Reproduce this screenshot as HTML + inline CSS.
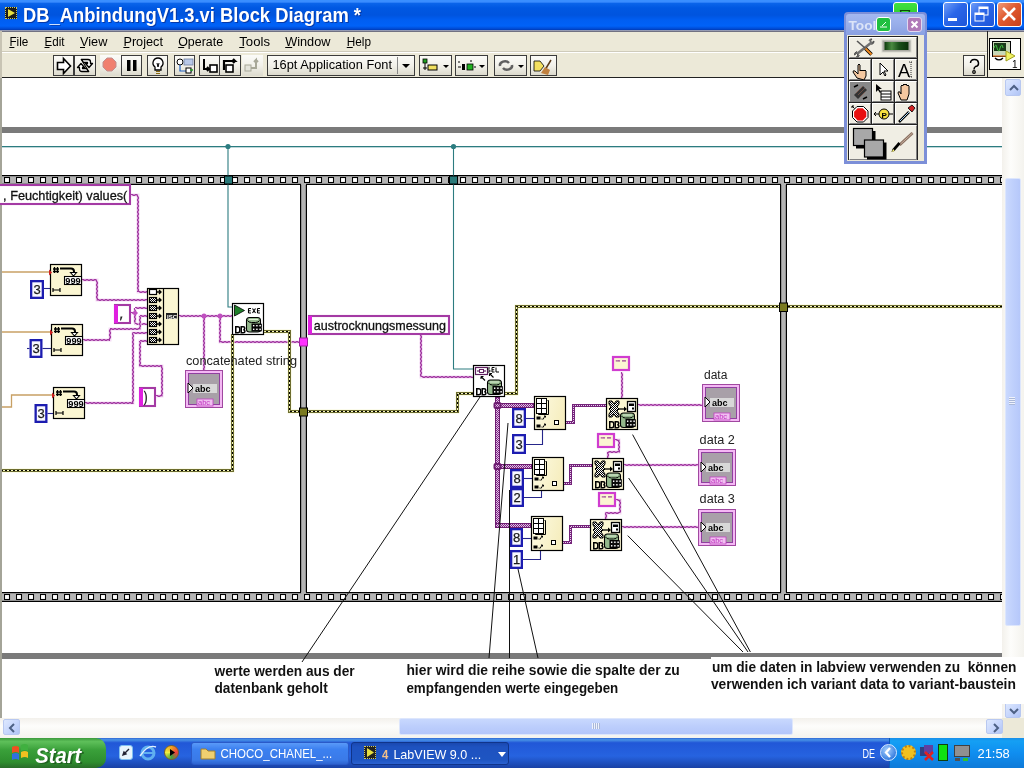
<!DOCTYPE html>
<html><head><meta charset="utf-8">
<style>
*{box-sizing:border-box}
html,body{margin:0;padding:0;width:1024px;height:768px;overflow:hidden;background:#fff;font-family:"Liberation Sans",sans-serif}
.a{position:absolute}
svg text{font-family:"Liberation Sans",sans-serif}
svg{will-change:transform}
#title{left:0;top:0;width:1024px;height:32px;background:linear-gradient(#3a90ff 0px,#3a8cff 2px,#0a64ea 3.5px,#0058e2 8px,#0054de 15px,#005ef2 20px,#0062f8 26px,#0048d0 29px,#003cb8 29.8px,#a8b0cc 30px,#6a6a78 31.7px)}
#ttext{left:21.5px;top:4px;color:#fff;font-weight:bold;font-size:20px;white-space:nowrap;text-shadow:1px 1px 0 #0a2a88;letter-spacing:-0.8px}
.tbtn{top:2px;width:25px;height:25px;border:1.5px solid #fff;border-radius:3px;background:linear-gradient(135deg,#6f9ef8 0%,#2a66e8 45%,#1e55d8 100%)}
#menu{left:0;top:32px;width:1024px;height:46px;background:#ece9d8}
.mi{top:34px;font-size:12.5px;color:#000;white-space:nowrap}
.tb{background:linear-gradient(#fbfbf8,#f2f1ea 50%,#dcdacd)}
.sbtn{border:1px solid #b8c8f0;border-radius:2px;background:linear-gradient(135deg,#dde8fe,#c4d4fc 60%,#b0c4f4)}
.sthumb{border:1px solid #dde6fc;border-radius:2px;background:linear-gradient(90deg,#cad9fe,#bfd0fc 50%,#b6c8fa)}
#vs{left:1002px;top:78px;width:22px;height:640px;background:linear-gradient(90deg,#f3f1ec,#fdfdfb 40%,#f4f3ee)}
#hs{left:0;top:718px;width:1002px;height:20px;background:linear-gradient(#f3f1ec,#fdfdfb 40%,#f4f3ee)}
#corner{left:1002px;top:718px;width:22px;height:20px;background:#ece9d8}
#task{left:0;top:738px;width:1024px;height:30px;background:linear-gradient(#3168d5 0%,#4993e6 6%,#2157d7 16%,#2663e0 60%,#1941a5 100%)}
</style></head><body>
<div id="title" class="a"></div>
<svg class="a" style="left:0;top:0" width="1024" height="31"><text opacity="0.7" x="24.00" y="23" font-size="20.6" font-weight="bold" fill="#0a2a88" textLength="337.99" lengthAdjust="spacingAndGlyphs" style="white-space:pre" >DB_AnbindungV1.3.vi Block Diagram *</text><text x="23.00" y="22" font-size="20.6" font-weight="bold" fill="#fff" textLength="337.99" lengthAdjust="spacingAndGlyphs" style="white-space:pre" >DB_AnbindungV1.3.vi Block Diagram *</text></svg>
<div class="a tbtn" style="left:943px"><div class="a" style="left:4px;top:15px;width:9px;height:3px;background:#fff"></div></div>
<div class="a tbtn" style="left:970px"><svg class="a" style="left:0;top:0" width="22" height="22"><rect x="8" y="4" width="9" height="8" fill="none" stroke="#fff" stroke-width="1"/><rect x="8" y="4" width="9" height="2" fill="#fff"/><rect x="4" y="10" width="9" height="8" fill="#2a66e8" stroke="#fff" stroke-width="1"/><rect x="4" y="10" width="9" height="2" fill="#fff"/></svg></div>
<div class="a tbtn" style="left:997px;background:linear-gradient(135deg,#f09a78 0%,#e05a30 45%,#c8401c 100%)"><svg class="a" style="left:0;top:0" width="22" height="22"><path d="M5,5 l12,12 M17,5 l-12,12" stroke="#fff" stroke-width="2.6"/></svg></div>
<div id="menu" class="a"></div>
<svg class="a" style="left:0;top:0" width="1024" height="80"><text x="9.40" y="46" font-size="12.5" fill="#000" textLength="18.90" lengthAdjust="spacingAndGlyphs" style="white-space:pre" >File</text><rect x="9.4" y="47" width="5" height="1" fill="#000"/><text x="44.50" y="46" font-size="12.5" fill="#000" textLength="20.00" lengthAdjust="spacingAndGlyphs" style="white-space:pre" >Edit</text><rect x="44.5" y="47" width="5" height="1" fill="#000"/><text x="80.00" y="46" font-size="12.5" fill="#000" textLength="27.37" lengthAdjust="spacingAndGlyphs" style="white-space:pre" >View</text><rect x="80" y="47" width="5" height="1" fill="#000"/><text x="123.40" y="46" font-size="12.5" fill="#000" textLength="39.60" lengthAdjust="spacingAndGlyphs" style="white-space:pre" >Project</text><rect x="123.4" y="47" width="6" height="1" fill="#000"/><text x="178.20" y="46" font-size="12.5" fill="#000" textLength="44.90" lengthAdjust="spacingAndGlyphs" style="white-space:pre" >Operate</text><rect x="178.2" y="47" width="6" height="1" fill="#000"/><text x="239.30" y="46" font-size="12.5" fill="#000" textLength="30.71" lengthAdjust="spacingAndGlyphs" style="white-space:pre" >Tools</text><rect x="239.3" y="47" width="5" height="1" fill="#000"/><text x="285.20" y="46" font-size="12.5" fill="#000" textLength="45.27" lengthAdjust="spacingAndGlyphs" style="white-space:pre" >Window</text><rect x="285.2" y="47" width="7" height="1" fill="#000"/><text x="346.75" y="46" font-size="12.5" fill="#000" textLength="24.25" lengthAdjust="spacingAndGlyphs" style="white-space:pre" >Help</text><rect x="346.75" y="47" width="6" height="1" fill="#000"/></svg>
<div class="a" style="left:0;top:52px;width:987px;height:1px;background:#fff"></div>
<div class="a" style="left:0;top:51px;width:987px;height:1px;background:#cfcbbb"></div>
<div class="a" style="left:987px;top:31px;width:1px;height:47px;background:#222"></div>
<div class="a" style="left:0;top:77px;width:1024px;height:1.3px;background:#222"></div>
<div class="a" style="left:0;top:31px;width:2px;height:47px;background:#c8c4b4"></div>
<div class="a tb" style="left:53px;top:55px;width:21px;height:21px;border:1px solid #3c3c3c;"><svg width="19" height="19" style="position:absolute;left:0;top:0"><path d="M3.5,6.5h6v-4l7,7.5l-7,7.5v-4h-6z" fill="#fff" stroke="#000" stroke-width="1.6"/></svg></div>
<div class="a tb" style="left:74px;top:55px;width:22px;height:21px;border:1px solid #3c3c3c;"><svg width="20" height="19" style="position:absolute;left:0;top:0"><path d="M6.5,3.5 h6.5 q2.5,0 2.5,2.5 v1.5 h2 l-3.5,4 l-3.5,-4 h2 v-1 h-4z" fill="#fff" stroke="#000" stroke-width="1.3" stroke-linejoin="round"/><path d="M13.5,15.5 h-6.5 q-2.5,0 -2.5,-2.5 v-1.5 h-2 l3.5,-4 l3.5,4 h-2 v1 h4z" fill="#fff" stroke="#000" stroke-width="1.3" stroke-linejoin="round"/><path d="M6,3 L14,16" stroke="#000" stroke-width="1.1"/></svg></div>
<div class="a tb" style="left:100px;top:55px;width:21px;height:21px;"><svg width="19" height="19" style="position:absolute;left:0;top:0"><path d="M7,3h5l4,4v5l-4,4h-5l-4,-4v-5z" fill="#f08070" stroke="#c09090" stroke-width="1"/></svg></div>
<div class="a tb" style="left:121px;top:55px;width:21px;height:21px;border:1px solid #3c3c3c;"><svg width="19" height="19" style="position:absolute;left:0;top:0"><rect x="5" y="4" width="3.5" height="11" fill="#000"/><rect x="11" y="4" width="3.5" height="11" fill="#000"/></svg></div>
<div class="a tb" style="left:147px;top:55px;width:21px;height:21px;border:1px solid #3c3c3c;"><svg width="19" height="19" style="position:absolute;left:0;top:0"><path d="M10,2 a5,5 0 0 1 3,9 v3 h-6 v-3 a5,5 0 0 1 3,-9z" fill="#fff" stroke="#000" stroke-width="1.3"/><path d="M8,15.5h4M8,17.5h4" stroke="#8a6a10" stroke-width="1.2"/><path d="M9,7 l1,4 l1,-4" fill="none" stroke="#000"/></svg></div>
<div class="a tb" style="left:174px;top:55px;width:21px;height:21px;border:1px solid #3c3c3c;"><svg width="19" height="19" style="position:absolute;left:0;top:0"><circle cx="5" cy="6" r="3" fill="#fff" stroke="#000"/><path d="M5,9 v6 h12" fill="none" stroke="#2060c0" stroke-width="1.2"/><rect x="9" y="3" width="9" height="6" fill="#b8c8e8" stroke="#7080a0" stroke-width="0.8"/><rect x="11" y="12" width="5" height="5" fill="#fff" stroke="#000"/><path d="M15,14 h3" stroke="#20a020" stroke-width="1.5"/></svg></div>
<div class="a tb" style="left:199px;top:55px;width:21px;height:21px;border:1px solid #3c3c3c;"><svg width="19" height="19" style="position:absolute;left:0;top:0"><path d="M4,3 v10 h5 l-2,-2 M9,13 l-2,2" fill="none" stroke="#000" stroke-width="2"/><rect x="10" y="9" width="7" height="7" fill="#fff" stroke="#000" stroke-width="1.6"/></svg></div>
<div class="a tb" style="left:219px;top:55px;width:22px;height:21px;border:1px solid #3c3c3c;"><svg width="20" height="19" style="position:absolute;left:0;top:0"><path d="M4,14 v-9 h11 l-2,-2 M15,5 l-2,2" fill="none" stroke="#000" stroke-width="2.2"/><rect x="6" y="9" width="7" height="7" fill="#fff" stroke="#000" stroke-width="1.6"/></svg></div>
<div class="a tb" style="left:242px;top:55px;width:21px;height:21px;"><svg width="19" height="19" style="position:absolute;left:0;top:0"><rect x="3" y="10" width="6" height="6" fill="#e4e4dc" stroke="#a8a898"/><path d="M9,13 h5 v-8 l-2,2 M14,5 l2,2" fill="none" stroke="#a8a898" stroke-width="2"/></svg></div>
<div class="a tb" style="left:267px;top:55px;width:148px;height:21px;border:1px solid #3c3c3c"></div>
<svg class="a" style="left:0;top:0" width="1024" height="80"><text x="272.50" y="69.4" font-size="12.2" fill="#000" textLength="119.50" lengthAdjust="spacingAndGlyphs" style="white-space:pre" >16pt Application Font</text></svg>
<div class="a" style="left:397px;top:57px;width:1px;height:17px;background:#888"></div>
<div class="a" style="left:402px;top:64px;width:0;height:0;border-left:4px solid transparent;border-right:4px solid transparent;border-top:4px solid #000"></div>
<div class="a tb" style="left:419px;top:55px;width:33px;height:21px;border:1px solid #3c3c3c;"><svg width="31" height="19" style="position:absolute;left:0;top:0"><rect x="3" y="3" width="4" height="4" fill="#20a020" stroke="#000" stroke-width="0.8"/><path d="M5,7 v7 M3,12 h4" stroke="#000" stroke-width="1"/><rect x="8" y="9" width="9" height="5" fill="#f0e060" stroke="#000" stroke-width="1"/><path d="M23,9 l3,3 l3,-3z" fill="#000"/></svg></div>
<div class="a tb" style="left:455px;top:55px;width:33px;height:21px;border:1px solid #3c3c3c;"><svg width="31" height="19" style="position:absolute;left:0;top:0"><path d="M2,6 h2 M15,4 v2 M6,5 v0" stroke="#000"/><rect x="6" y="8" width="3" height="6" fill="#000"/><rect x="11" y="8" width="6" height="6" fill="#20b020" stroke="#000" stroke-width="0.8"/><path d="M2,11 h3 M18,11 h2" stroke="#000"/><path d="M23,9 l3,3 l3,-3z" fill="#000"/></svg></div>
<div class="a tb" style="left:494px;top:55px;width:33px;height:21px;border:1px solid #3c3c3c;"><svg width="31" height="19" style="position:absolute;left:0;top:0"><path d="M5,10 a5,4 0 0 1 9,-3" fill="none" stroke="#606060" stroke-width="2.5"/><path d="M17,9 a5,4 0 0 1 -9,3" fill="none" stroke="#606060" stroke-width="2.5"/><path d="M23,9 l3,3 l3,-3z" fill="#000"/></svg></div>
<div class="a tb" style="left:530px;top:55px;width:27px;height:21px;border:1px solid #3c3c3c;"><svg width="25" height="19" style="position:absolute;left:0;top:0"><path d="M3,5 h6 l4,5 l-4,5 h-6z" fill="#f4e060" stroke="#000" stroke-width="0.8"/><path d="M14,14 l6,-10" stroke="#5a3a1a" stroke-width="1.5"/><path d="M10,17 l4,-6 l5,3 l-2,5z" fill="#c08040"/></svg></div>
<div class="a tb" style="left:963px;top:55px;width:22px;height:21px;border:1px solid #3c3c3c;"><svg width="20" height="19" style="position:absolute;left:0;top:0"><path d="M6.5,7 a4,3.5 0 1 1 5,3.5 q-1.5,1 -1.5,3" fill="none" stroke="#000" stroke-width="1.5"/><circle cx="10" cy="16" r="1.3" fill="none" stroke="#000" stroke-width="1.2"/></svg></div>
<div class="a" style="left:989px;top:38px;width:32px;height:32px;background:#fff;border:1.2px solid #000"><svg width="30" height="30" style="position:absolute;left:0;top:0"><rect x="2.5" y="2.5" width="18" height="15" fill="#c8d8b8" stroke="#000" stroke-width="1"/><rect x="4" y="4" width="12" height="8" fill="#1a3a1a"/><path d="M4,9 q2,-6 3,0 q2,6 3,0 q2,-6 3,0" fill="none" stroke="#40c040" stroke-width="1"/><path d="M3,17 h14" stroke="#e07020" stroke-width="1.2"/><path d="M5,19 q4,4 8,0" fill="none" stroke="#000" stroke-width="1.2"/><path d="M16,12 l9,5 l-9,5z" fill="#f0f060" stroke="#a0a020" stroke-width="1"/><text x="22" y="29" font-size="10" fill="#000">1</text></svg></div>
<div class="a" style="left:5px;top:7px;width:12px;height:12px;background:#1a1a1a;border:1px dotted #c8c860"><svg width="10" height="10" style="position:absolute;left:0;top:0"><path d="M2,1 l7,4 l-7,4z" fill="#e8e040"/></svg></div>
<div class="a" style="left:893px;top:2px;width:25px;height:25px;border:1.5px solid #fff;border-radius:3px;background:linear-gradient(#40e040,#20c020)"><svg class="a" style="left:0;top:0" width="22" height="22"><path d="M6.5,7.5 h9 l-1,4 h-7z M5.5,11.5 h11 v3 h-11z" fill="none" stroke="#0a4a0a" stroke-width="1.2"/></svg></div>
<svg class="a" style="left:0;top:0" width="1024" height="768" viewBox="0 0 1024 768">
<defs><clipPath id="dclip"><rect x="0" y="78" width="1002" height="640"/></clipPath></defs>
<g clip-path="url(#dclip)">
<rect x="0" y="78" width="1002" height="640" fill="#fff"/>
<rect x="0" y="78" width="2" height="640" fill="#a4a498"/>
<rect x="2" y="127" width="1000" height="6" fill="#7a7a7a"/>
<rect x="2" y="653" width="1000" height="6" fill="#7a7a7a"/>
<rect x="2" y="146" width="1000" height="1.3" fill="#2c7c80"/>
<defs><pattern id="chk" x="0" y="0" width="2" height="2" patternUnits="userSpaceOnUse"><rect width="2" height="2" fill="#fff"/><rect width="1" height="1" fill="#000"/><rect x="1" y="1" width="1" height="1" fill="#000"/></pattern><pattern id="vchk" x="0" y="0" width="2" height="2" patternUnits="userSpaceOnUse"><rect width="2" height="2" fill="#e4bce8"/><rect width="1" height="1" fill="#7a2a80"/><rect x="1" y="1" width="1" height="1" fill="#7a2a80"/></pattern><linearGradient id="nodeg" x1="0" x2="1" y1="0" y2="0.3"><stop offset="0" stop-color="#fdfbe4"/><stop offset="1" stop-color="#f6eec0"/></linearGradient><pattern id="sq1" x="4" y="177" width="12" height="6" patternUnits="userSpaceOnUse"><rect x="0.5" y="0.5" width="5" height="5" fill="#fff" stroke="#000" stroke-width="1.1"/></pattern><pattern id="sq2" x="4" y="594" width="12" height="6" patternUnits="userSpaceOnUse"><rect x="0.5" y="0.5" width="5" height="5" fill="#fff" stroke="#000" stroke-width="1.1"/></pattern></defs>
<rect x="2" y="175" width="1000" height="10" fill="#b4b4b4"/>
<rect x="2" y="175" width="1000" height="1.2" fill="#000"/>
<rect x="2" y="183.8" width="1000" height="1.2" fill="#000"/>
<rect x="2" y="177" width="1000" height="6" fill="url(#sq1)"/>
<rect x="2" y="592" width="1000" height="10" fill="#b4b4b4"/>
<rect x="2" y="592" width="1000" height="1.2" fill="#000"/>
<rect x="2" y="600.8" width="1000" height="1.2" fill="#000"/>
<rect x="2" y="594" width="1000" height="6" fill="url(#sq2)"/>
<rect x="300" y="184" width="7" height="409" fill="#b4b4b4"/>
<rect x="300" y="184" width="1.2" height="409" fill="#000"/>
<rect x="305.8" y="184" width="1.2" height="409" fill="#000"/>
<rect x="301.2" y="183" width="4.6" height="2" fill="#b4b4b4"/>
<rect x="301.2" y="592" width="4.6" height="2" fill="#b4b4b4"/>
<rect x="780" y="184" width="7" height="409" fill="#b4b4b4"/>
<rect x="780" y="184" width="1.2" height="409" fill="#000"/>
<rect x="785.8" y="184" width="1.2" height="409" fill="#000"/>
<rect x="781.2" y="183" width="4.6" height="2" fill="#b4b4b4"/>
<rect x="781.2" y="592" width="4.6" height="2" fill="#b4b4b4"/>
<polyline points="228,146 228,307 232,307" fill="none" stroke="#2c7c80" stroke-width="1.1"/>
<polyline points="453.5,146 453.5,369 473,369" fill="none" stroke="#2c7c80" stroke-width="1.1"/>
<circle cx="228" cy="146.5" r="2.6" fill="#2c7c80"/><circle cx="453.5" cy="146.5" r="2.6" fill="#2c7c80"/>
<rect x="224.5" y="176" width="8" height="8" fill="#2a7a7a" stroke="#000" stroke-width="1"/>
<rect x="449.5" y="176" width="8" height="8" fill="#2a7a7a" stroke="#000" stroke-width="1"/>
<polyline points="2,272 50,272" fill="none" stroke="#c8a064" stroke-width="1.3"/>
<polyline points="2,332 51,332" fill="none" stroke="#c8a064" stroke-width="1.3"/>
<polyline points="2,407 11.5,407 11.5,395 53,395" fill="none" stroke="#c8a064" stroke-width="1.3"/>
<polyline points="131,195 138,195 138,292 147,292" fill="none" stroke="#f6dcf6" stroke-width="3"/><path d="M131.0,194.5 H133.0 V195.5 H135.0 V194.5 H137.0 V195.5 H138.0 M137.5,195.0 V197.0 H138.5 V199.0 H137.5 V201.0 H138.5 V203.0 H137.5 V205.0 H138.5 V207.0 H137.5 V209.0 H138.5 V211.0 H137.5 V213.0 H138.5 V215.0 H137.5 V217.0 H138.5 V219.0 H137.5 V221.0 H138.5 V223.0 H137.5 V225.0 H138.5 V227.0 H137.5 V229.0 H138.5 V231.0 H137.5 V233.0 H138.5 V235.0 H137.5 V237.0 H138.5 V239.0 H137.5 V241.0 H138.5 V243.0 H137.5 V245.0 H138.5 V247.0 H137.5 V249.0 H138.5 V251.0 H137.5 V253.0 H138.5 V255.0 H137.5 V257.0 H138.5 V259.0 H137.5 V261.0 H138.5 V263.0 H137.5 V265.0 H138.5 V267.0 H137.5 V269.0 H138.5 V271.0 H137.5 V273.0 H138.5 V275.0 H137.5 V277.0 H138.5 V279.0 H137.5 V281.0 H138.5 V283.0 H137.5 V285.0 H138.5 V287.0 H137.5 V289.0 H138.5 V291.0 H137.5 V292.0 M138.0,291.5 H140.0 V292.5 H142.0 V291.5 H144.0 V292.5 H146.0 V291.5 H147.0" fill="none" stroke="#a23aa2" stroke-width="1.1"/>
<polyline points="82,280 97,280 97,300 147,300" fill="none" stroke="#f6dcf6" stroke-width="3"/><path d="M82.0,279.5 H84.0 V280.5 H86.0 V279.5 H88.0 V280.5 H90.0 V279.5 H92.0 V280.5 H94.0 V279.5 H96.0 V280.5 H97.0 M96.5,280.0 V282.0 H97.5 V284.0 H96.5 V286.0 H97.5 V288.0 H96.5 V290.0 H97.5 V292.0 H96.5 V294.0 H97.5 V296.0 H96.5 V298.0 H97.5 V300.0 H96.5 V300.0 M97.0,299.5 H99.0 V300.5 H101.0 V299.5 H103.0 V300.5 H105.0 V299.5 H107.0 V300.5 H109.0 V299.5 H111.0 V300.5 H113.0 V299.5 H115.0 V300.5 H117.0 V299.5 H119.0 V300.5 H121.0 V299.5 H123.0 V300.5 H125.0 V299.5 H127.0 V300.5 H129.0 V299.5 H131.0 V300.5 H133.0 V299.5 H135.0 V300.5 H137.0 V299.5 H139.0 V300.5 H141.0 V299.5 H143.0 V300.5 H145.0 V299.5 H147.0 V300.5 H147.0" fill="none" stroke="#a23aa2" stroke-width="1.1"/>
<polyline points="131,313 135,313" fill="none" stroke="#f6dcf6" stroke-width="3"/><path d="M131.0,312.5 H133.0 V313.5 H135.0 V312.5 H135.0" fill="none" stroke="#a23aa2" stroke-width="1.1"/>
<polyline points="135,308 135,324" fill="none" stroke="#f6dcf6" stroke-width="3"/><path d="M134.5,308.0 V310.0 H135.5 V312.0 H134.5 V314.0 H135.5 V316.0 H134.5 V318.0 H135.5 V320.0 H134.5 V322.0 H135.5 V324.0 H134.5 V324.0" fill="none" stroke="#a23aa2" stroke-width="1.1"/>
<polyline points="135,308 147,308" fill="none" stroke="#f6dcf6" stroke-width="3"/><path d="M135.0,307.5 H137.0 V308.5 H139.0 V307.5 H141.0 V308.5 H143.0 V307.5 H145.0 V308.5 H147.0 V307.5 H147.0" fill="none" stroke="#a23aa2" stroke-width="1.1"/>
<polyline points="135,324 147,324" fill="none" stroke="#f6dcf6" stroke-width="3"/><path d="M135.0,323.5 H137.0 V324.5 H139.0 V323.5 H141.0 V324.5 H143.0 V323.5 H145.0 V324.5 H147.0 V323.5 H147.0" fill="none" stroke="#a23aa2" stroke-width="1.1"/>
<polyline points="83,340 110,340 110,329 140,329 140,316 147,316" fill="none" stroke="#f6dcf6" stroke-width="3"/><path d="M83.0,339.5 H85.0 V340.5 H87.0 V339.5 H89.0 V340.5 H91.0 V339.5 H93.0 V340.5 H95.0 V339.5 H97.0 V340.5 H99.0 V339.5 H101.0 V340.5 H103.0 V339.5 H105.0 V340.5 H107.0 V339.5 H109.0 V340.5 H110.0 M109.5,340.0 V338.0 H110.5 V336.0 H109.5 V334.0 H110.5 V332.0 H109.5 V330.0 H110.5 V329.0 M110.0,328.5 H112.0 V329.5 H114.0 V328.5 H116.0 V329.5 H118.0 V328.5 H120.0 V329.5 H122.0 V328.5 H124.0 V329.5 H126.0 V328.5 H128.0 V329.5 H130.0 V328.5 H132.0 V329.5 H134.0 V328.5 H136.0 V329.5 H138.0 V328.5 H140.0 V329.5 H140.0 M139.5,329.0 V327.0 H140.5 V325.0 H139.5 V323.0 H140.5 V321.0 H139.5 V319.0 H140.5 V317.0 H139.5 V316.0 M140.0,315.5 H142.0 V316.5 H144.0 V315.5 H146.0 V316.5 H147.0" fill="none" stroke="#a23aa2" stroke-width="1.1"/>
<polyline points="85,403 133,403 133,333 147,333" fill="none" stroke="#f6dcf6" stroke-width="3"/><path d="M85.0,402.5 H87.0 V403.5 H89.0 V402.5 H91.0 V403.5 H93.0 V402.5 H95.0 V403.5 H97.0 V402.5 H99.0 V403.5 H101.0 V402.5 H103.0 V403.5 H105.0 V402.5 H107.0 V403.5 H109.0 V402.5 H111.0 V403.5 H113.0 V402.5 H115.0 V403.5 H117.0 V402.5 H119.0 V403.5 H121.0 V402.5 H123.0 V403.5 H125.0 V402.5 H127.0 V403.5 H129.0 V402.5 H131.0 V403.5 H133.0 V402.5 H133.0 M132.5,403.0 V401.0 H133.5 V399.0 H132.5 V397.0 H133.5 V395.0 H132.5 V393.0 H133.5 V391.0 H132.5 V389.0 H133.5 V387.0 H132.5 V385.0 H133.5 V383.0 H132.5 V381.0 H133.5 V379.0 H132.5 V377.0 H133.5 V375.0 H132.5 V373.0 H133.5 V371.0 H132.5 V369.0 H133.5 V367.0 H132.5 V365.0 H133.5 V363.0 H132.5 V361.0 H133.5 V359.0 H132.5 V357.0 H133.5 V355.0 H132.5 V353.0 H133.5 V351.0 H132.5 V349.0 H133.5 V347.0 H132.5 V345.0 H133.5 V343.0 H132.5 V341.0 H133.5 V339.0 H132.5 V337.0 H133.5 V335.0 H132.5 V333.0 H133.5 V333.0 M133.0,332.5 H135.0 V333.5 H137.0 V332.5 H139.0 V333.5 H141.0 V332.5 H143.0 V333.5 H145.0 V332.5 H147.0 V333.5 H147.0" fill="none" stroke="#a23aa2" stroke-width="1.1"/>
<polyline points="156,396 162,396 162,366 140,366 140,341 147,341" fill="none" stroke="#f6dcf6" stroke-width="3"/><path d="M156.0,395.5 H158.0 V396.5 H160.0 V395.5 H162.0 V396.5 H162.0 M161.5,396.0 V394.0 H162.5 V392.0 H161.5 V390.0 H162.5 V388.0 H161.5 V386.0 H162.5 V384.0 H161.5 V382.0 H162.5 V380.0 H161.5 V378.0 H162.5 V376.0 H161.5 V374.0 H162.5 V372.0 H161.5 V370.0 H162.5 V368.0 H161.5 V366.0 H162.5 V366.0 M162.0,365.5 H160.0 V366.5 H158.0 V365.5 H156.0 V366.5 H154.0 V365.5 H152.0 V366.5 H150.0 V365.5 H148.0 V366.5 H146.0 V365.5 H144.0 V366.5 H142.0 V365.5 H140.0 V366.5 H140.0 M139.5,366.0 V364.0 H140.5 V362.0 H139.5 V360.0 H140.5 V358.0 H139.5 V356.0 H140.5 V354.0 H139.5 V352.0 H140.5 V350.0 H139.5 V348.0 H140.5 V346.0 H139.5 V344.0 H140.5 V342.0 H139.5 V341.0 M140.0,340.5 H142.0 V341.5 H144.0 V340.5 H146.0 V341.5 H147.0" fill="none" stroke="#a23aa2" stroke-width="1.1"/>
<polyline points="179,316 232,316" fill="none" stroke="#f6dcf6" stroke-width="3"/><path d="M179.0,315.5 H181.0 V316.5 H183.0 V315.5 H185.0 V316.5 H187.0 V315.5 H189.0 V316.5 H191.0 V315.5 H193.0 V316.5 H195.0 V315.5 H197.0 V316.5 H199.0 V315.5 H201.0 V316.5 H203.0 V315.5 H205.0 V316.5 H207.0 V315.5 H209.0 V316.5 H211.0 V315.5 H213.0 V316.5 H215.0 V315.5 H217.0 V316.5 H219.0 V315.5 H221.0 V316.5 H223.0 V315.5 H225.0 V316.5 H227.0 V315.5 H229.0 V316.5 H231.0 V315.5 H232.0" fill="none" stroke="#a23aa2" stroke-width="1.1"/>
<polyline points="204,316 204,371" fill="none" stroke="#f6dcf6" stroke-width="3"/><path d="M203.5,316.0 V318.0 H204.5 V320.0 H203.5 V322.0 H204.5 V324.0 H203.5 V326.0 H204.5 V328.0 H203.5 V330.0 H204.5 V332.0 H203.5 V334.0 H204.5 V336.0 H203.5 V338.0 H204.5 V340.0 H203.5 V342.0 H204.5 V344.0 H203.5 V346.0 H204.5 V348.0 H203.5 V350.0 H204.5 V352.0 H203.5 V354.0 H204.5 V356.0 H203.5 V358.0 H204.5 V360.0 H203.5 V362.0 H204.5 V364.0 H203.5 V366.0 H204.5 V368.0 H203.5 V370.0 H204.5 V371.0" fill="none" stroke="#a23aa2" stroke-width="1.1"/>
<polyline points="220,316 220,342 300,342" fill="none" stroke="#f6dcf6" stroke-width="3"/><path d="M219.5,316.0 V318.0 H220.5 V320.0 H219.5 V322.0 H220.5 V324.0 H219.5 V326.0 H220.5 V328.0 H219.5 V330.0 H220.5 V332.0 H219.5 V334.0 H220.5 V336.0 H219.5 V338.0 H220.5 V340.0 H219.5 V342.0 H220.5 V342.0 M220.0,341.5 H222.0 V342.5 H224.0 V341.5 H226.0 V342.5 H228.0 V341.5 H230.0 V342.5 H232.0 V341.5 H234.0 V342.5 H236.0 V341.5 H238.0 V342.5 H240.0 V341.5 H242.0 V342.5 H244.0 V341.5 H246.0 V342.5 H248.0 V341.5 H250.0 V342.5 H252.0 V341.5 H254.0 V342.5 H256.0 V341.5 H258.0 V342.5 H260.0 V341.5 H262.0 V342.5 H264.0 V341.5 H266.0 V342.5 H268.0 V341.5 H270.0 V342.5 H272.0 V341.5 H274.0 V342.5 H276.0 V341.5 H278.0 V342.5 H280.0 V341.5 H282.0 V342.5 H284.0 V341.5 H286.0 V342.5 H288.0 V341.5 H290.0 V342.5 H292.0 V341.5 H294.0 V342.5 H296.0 V341.5 H298.0 V342.5 H300.0 V341.5 H300.0" fill="none" stroke="#a23aa2" stroke-width="1.1"/>
<polyline points="421,334 421,377 473,377" fill="none" stroke="#f6dcf6" stroke-width="3"/><path d="M420.5,334.0 V336.0 H421.5 V338.0 H420.5 V340.0 H421.5 V342.0 H420.5 V344.0 H421.5 V346.0 H420.5 V348.0 H421.5 V350.0 H420.5 V352.0 H421.5 V354.0 H420.5 V356.0 H421.5 V358.0 H420.5 V360.0 H421.5 V362.0 H420.5 V364.0 H421.5 V366.0 H420.5 V368.0 H421.5 V370.0 H420.5 V372.0 H421.5 V374.0 H420.5 V376.0 H421.5 V377.0 M421.0,376.5 H423.0 V377.5 H425.0 V376.5 H427.0 V377.5 H429.0 V376.5 H431.0 V377.5 H433.0 V376.5 H435.0 V377.5 H437.0 V376.5 H439.0 V377.5 H441.0 V376.5 H443.0 V377.5 H445.0 V376.5 H447.0 V377.5 H449.0 V376.5 H451.0 V377.5 H453.0 V376.5 H455.0 V377.5 H457.0 V376.5 H459.0 V377.5 H461.0 V376.5 H463.0 V377.5 H465.0 V376.5 H467.0 V377.5 H469.0 V376.5 H471.0 V377.5 H473.0 V376.5 H473.0" fill="none" stroke="#a23aa2" stroke-width="1.1"/>
<polyline points="622,372 622,398" fill="none" stroke="#f6dcf6" stroke-width="3"/><path d="M621.5,372.0 V374.0 H622.5 V376.0 H621.5 V378.0 H622.5 V380.0 H621.5 V382.0 H622.5 V384.0 H621.5 V386.0 H622.5 V388.0 H621.5 V390.0 H622.5 V392.0 H621.5 V394.0 H622.5 V396.0 H621.5 V398.0 H622.5 V398.0" fill="none" stroke="#a23aa2" stroke-width="1.1"/>
<polyline points="615,440 619,440 619,452 608,452 608,458" fill="none" stroke="#f6dcf6" stroke-width="3"/><path d="M615.0,439.5 H617.0 V440.5 H619.0 V439.5 H619.0 M618.5,440.0 V442.0 H619.5 V444.0 H618.5 V446.0 H619.5 V448.0 H618.5 V450.0 H619.5 V452.0 H618.5 V452.0 M619.0,451.5 H617.0 V452.5 H615.0 V451.5 H613.0 V452.5 H611.0 V451.5 H609.0 V452.5 H608.0 M607.5,452.0 V454.0 H608.5 V456.0 H607.5 V458.0 H608.5 V458.0" fill="none" stroke="#a23aa2" stroke-width="1.1"/>
<polyline points="616,500 620,500 620,513 606,513 606,519" fill="none" stroke="#f6dcf6" stroke-width="3"/><path d="M616.0,499.5 H618.0 V500.5 H620.0 V499.5 H620.0 M619.5,500.0 V502.0 H620.5 V504.0 H619.5 V506.0 H620.5 V508.0 H619.5 V510.0 H620.5 V512.0 H619.5 V513.0 M620.0,512.5 H618.0 V513.5 H616.0 V512.5 H614.0 V513.5 H612.0 V512.5 H610.0 V513.5 H608.0 V512.5 H606.0 V513.5 H606.0 M605.5,513.0 V515.0 H606.5 V517.0 H605.5 V519.0 H606.5 V519.0" fill="none" stroke="#a23aa2" stroke-width="1.1"/>
<polyline points="638,405 702,405" fill="none" stroke="#f6dcf6" stroke-width="3"/><path d="M638.0,404.5 H640.0 V405.5 H642.0 V404.5 H644.0 V405.5 H646.0 V404.5 H648.0 V405.5 H650.0 V404.5 H652.0 V405.5 H654.0 V404.5 H656.0 V405.5 H658.0 V404.5 H660.0 V405.5 H662.0 V404.5 H664.0 V405.5 H666.0 V404.5 H668.0 V405.5 H670.0 V404.5 H672.0 V405.5 H674.0 V404.5 H676.0 V405.5 H678.0 V404.5 H680.0 V405.5 H682.0 V404.5 H684.0 V405.5 H686.0 V404.5 H688.0 V405.5 H690.0 V404.5 H692.0 V405.5 H694.0 V404.5 H696.0 V405.5 H698.0 V404.5 H700.0 V405.5 H702.0 V404.5 H702.0" fill="none" stroke="#a23aa2" stroke-width="1.1"/>
<polyline points="624,465 698,465" fill="none" stroke="#f6dcf6" stroke-width="3"/><path d="M624.0,464.5 H626.0 V465.5 H628.0 V464.5 H630.0 V465.5 H632.0 V464.5 H634.0 V465.5 H636.0 V464.5 H638.0 V465.5 H640.0 V464.5 H642.0 V465.5 H644.0 V464.5 H646.0 V465.5 H648.0 V464.5 H650.0 V465.5 H652.0 V464.5 H654.0 V465.5 H656.0 V464.5 H658.0 V465.5 H660.0 V464.5 H662.0 V465.5 H664.0 V464.5 H666.0 V465.5 H668.0 V464.5 H670.0 V465.5 H672.0 V464.5 H674.0 V465.5 H676.0 V464.5 H678.0 V465.5 H680.0 V464.5 H682.0 V465.5 H684.0 V464.5 H686.0 V465.5 H688.0 V464.5 H690.0 V465.5 H692.0 V464.5 H694.0 V465.5 H696.0 V464.5 H698.0 V465.5 H698.0" fill="none" stroke="#a23aa2" stroke-width="1.1"/>
<polyline points="622,527 698,527" fill="none" stroke="#f6dcf6" stroke-width="3"/><path d="M622.0,526.5 H624.0 V527.5 H626.0 V526.5 H628.0 V527.5 H630.0 V526.5 H632.0 V527.5 H634.0 V526.5 H636.0 V527.5 H638.0 V526.5 H640.0 V527.5 H642.0 V526.5 H644.0 V527.5 H646.0 V526.5 H648.0 V527.5 H650.0 V526.5 H652.0 V527.5 H654.0 V526.5 H656.0 V527.5 H658.0 V526.5 H660.0 V527.5 H662.0 V526.5 H664.0 V527.5 H666.0 V526.5 H668.0 V527.5 H670.0 V526.5 H672.0 V527.5 H674.0 V526.5 H676.0 V527.5 H678.0 V526.5 H680.0 V527.5 H682.0 V526.5 H684.0 V527.5 H686.0 V526.5 H688.0 V527.5 H690.0 V526.5 H692.0 V527.5 H694.0 V526.5 H696.0 V527.5 H698.0 V526.5 H698.0" fill="none" stroke="#a23aa2" stroke-width="1.1"/>
<path d="M132,313 l3,-3 l3,3 l-3,3z" fill="#c050c0"/>
<circle cx="204" cy="316" r="2.5" fill="#c050c0"/><circle cx="220" cy="316" r="2.5" fill="#c050c0"/>
<polyline points="232.5,334 232.5,470.5 2,470.5" fill="none" stroke="#f8f8d8" stroke-width="4" stroke-linejoin="miter"/><polyline points="232.5,334 232.5,470.5 2,470.5" fill="none" stroke="#6e6e30" stroke-width="3" stroke-linejoin="miter"/><polyline points="232.5,334 232.5,470.5 2,470.5" fill="none" stroke="#000" stroke-width="1"/><polyline points="232.5,334 232.5,470.5 2,470.5" fill="none" stroke="#f8f8c0" stroke-width="1" stroke-dasharray="2,2"/>
<polyline points="264,331.5 289.5,331.5 289.5,411.5 303,411.5" fill="none" stroke="#f8f8d8" stroke-width="4" stroke-linejoin="miter"/><polyline points="264,331.5 289.5,331.5 289.5,411.5 303,411.5" fill="none" stroke="#6e6e30" stroke-width="3" stroke-linejoin="miter"/><polyline points="264,331.5 289.5,331.5 289.5,411.5 303,411.5" fill="none" stroke="#000" stroke-width="1"/><polyline points="264,331.5 289.5,331.5 289.5,411.5 303,411.5" fill="none" stroke="#f8f8c0" stroke-width="1" stroke-dasharray="2,2"/>
<polyline points="307,411.5 457.5,411.5 457.5,393.5 473,393.5" fill="none" stroke="#f8f8d8" stroke-width="4" stroke-linejoin="miter"/><polyline points="307,411.5 457.5,411.5 457.5,393.5 473,393.5" fill="none" stroke="#6e6e30" stroke-width="3" stroke-linejoin="miter"/><polyline points="307,411.5 457.5,411.5 457.5,393.5 473,393.5" fill="none" stroke="#000" stroke-width="1"/><polyline points="307,411.5 457.5,411.5 457.5,393.5 473,393.5" fill="none" stroke="#f8f8c0" stroke-width="1" stroke-dasharray="2,2"/>
<polyline points="505,393.5 516.5,393.5 516.5,306.5 1002,306.5" fill="none" stroke="#f8f8d8" stroke-width="4" stroke-linejoin="miter"/><polyline points="505,393.5 516.5,393.5 516.5,306.5 1002,306.5" fill="none" stroke="#6e6e30" stroke-width="3" stroke-linejoin="miter"/><polyline points="505,393.5 516.5,393.5 516.5,306.5 1002,306.5" fill="none" stroke="#000" stroke-width="1"/><polyline points="505,393.5 516.5,393.5 516.5,306.5 1002,306.5" fill="none" stroke="#f8f8c0" stroke-width="1" stroke-dasharray="2,2"/>
<rect x="299.5" y="408" width="8" height="8" fill="#7a7a20" stroke="#000" stroke-width="1"/>
<rect x="779.5" y="303" width="8" height="8.5" fill="#7a7a20" stroke="#000" stroke-width="1"/>
<rect x="299.5" y="338" width="8" height="8" fill="#ff30ff" stroke="#a020a0" stroke-width="1"/>
<rect x="495" y="397" width="5" height="131" fill="#6c1c70"/><rect x="496" y="398" width="3" height="129" fill="url(#vchk)"/>
<rect x="495" y="403" width="39" height="5" fill="#6c1c70"/><rect x="496" y="404" width="37" height="3" fill="url(#vchk)"/>
<rect x="495" y="464" width="37" height="5" fill="#6c1c70"/><rect x="496" y="465" width="35" height="3" fill="url(#vchk)"/>
<rect x="495" y="523" width="36" height="5" fill="#6c1c70"/><rect x="496" y="524" width="34" height="3" fill="url(#vchk)"/>
<rect x="493.5" y="402" width="8" height="7" rx="2" fill="#6c1c70"/><rect x="493.5" y="463" width="8" height="7" rx="2" fill="#6c1c70"/>
<rect x="495.5" y="404" width="4" height="3" fill="url(#vchk)"/><rect x="495.5" y="465" width="4" height="3" fill="url(#vchk)"/>
<polyline points="566,422.5 573.5,422.5 573.5,405.5 606,405.5" fill="none" stroke="#74247a" stroke-width="3"/><polyline points="566,422.5 573.5,422.5 573.5,405.5 606,405.5" fill="none" stroke="#ecd0f0" stroke-width="1" stroke-dasharray="1,1"/>
<polyline points="564,483.5 570.5,483.5 570.5,465.5 592,465.5" fill="none" stroke="#74247a" stroke-width="3"/><polyline points="564,483.5 570.5,483.5 570.5,465.5 592,465.5" fill="none" stroke="#ecd0f0" stroke-width="1" stroke-dasharray="1,1"/>
<polyline points="563,542.5 570.5,542.5 570.5,526.5 590,526.5" fill="none" stroke="#74247a" stroke-width="3"/><polyline points="563,542.5 570.5,542.5 570.5,526.5 590,526.5" fill="none" stroke="#ecd0f0" stroke-width="1" stroke-dasharray="1,1"/>
<polyline points="44,288.5 50,288.5" fill="none" stroke="#26268a" stroke-width="1.1"/>
<polyline points="27,348.5 29.5,348.5" fill="none" stroke="#26268a" stroke-width="1.1"/>
<polyline points="42.5,348.5 51,348.5" fill="none" stroke="#26268a" stroke-width="1.1"/>
<polyline points="47.5,413.5 53,413.5" fill="none" stroke="#26268a" stroke-width="1.1"/>
<polyline points="526,418.5 534,418.5" fill="none" stroke="#26268a" stroke-width="1.1"/>
<polyline points="526,444.5 542.5,444.5 542.5,430" fill="none" stroke="#26268a" stroke-width="1.1"/>
<polyline points="524,478.5 532,478.5" fill="none" stroke="#26268a" stroke-width="1.1"/>
<polyline points="524,497.5 541.5,497.5 541.5,491" fill="none" stroke="#26268a" stroke-width="1.1"/>
<polyline points="523,538.5 531,538.5" fill="none" stroke="#26268a" stroke-width="1.1"/>
<polyline points="523,559.5 540.5,559.5 540.5,551" fill="none" stroke="#26268a" stroke-width="1.1"/>
<line x1="480" y1="397" x2="302" y2="662" stroke="#111" stroke-width="1"/>
<line x1="508" y1="423" x2="489" y2="658" stroke="#111" stroke-width="1"/>
<line x1="509.5" y1="490" x2="509.5" y2="658" stroke="#111" stroke-width="1"/>
<line x1="518" y1="569" x2="538" y2="658" stroke="#111" stroke-width="1"/>
<line x1="632.6" y1="434.6" x2="750.4" y2="652" stroke="#111" stroke-width="1"/>
<line x1="628.6" y1="478" x2="748" y2="652" stroke="#111" stroke-width="1"/>
<line x1="627.7" y1="535.6" x2="743" y2="652" stroke="#111" stroke-width="1"/>
<g transform="translate(50,264)"><rect x="0.5" y="0.5" width="31" height="31" fill="#fbf6d2" stroke="#000" stroke-width="1.2"/><path d="M4.5,3 v6 M7.5,3 v6 M3,5 h6 M3,7.5 h6" fill="none" stroke="#000" stroke-width="1.3"/><path d="M10,4.5 h11 q3,0 3,3 v2" fill="none" stroke="#000" stroke-width="2"/><path d="M20.5,8.5 h6 l-3,3.5z" fill="#fff" stroke="#000" stroke-width="1.1"/><rect x="14.5" y="12.5" width="17" height="8" fill="#fff" stroke="#000" stroke-width="1.1"/><text x="15.3" y="19.6" font-size="8.2" font-weight="bold" fill="#000" font-family="Liberation Mono" textLength="15.5" lengthAdjust="spacingAndGlyphs">999</text><path d="M3,24 v4 M10,24 v4 M3,26 h7" stroke="#000" stroke-width="1.2"/><path d="M-1,5.5 l3,3 l-3,3z" fill="#d02020"/></g>
<g transform="translate(51,324)"><rect x="0.5" y="0.5" width="31" height="31" fill="#fbf6d2" stroke="#000" stroke-width="1.2"/><path d="M4.5,3 v6 M7.5,3 v6 M3,5 h6 M3,7.5 h6" fill="none" stroke="#000" stroke-width="1.3"/><path d="M10,4.5 h11 q3,0 3,3 v2" fill="none" stroke="#000" stroke-width="2"/><path d="M20.5,8.5 h6 l-3,3.5z" fill="#fff" stroke="#000" stroke-width="1.1"/><rect x="14.5" y="12.5" width="17" height="8" fill="#fff" stroke="#000" stroke-width="1.1"/><text x="15.3" y="19.6" font-size="8.2" font-weight="bold" fill="#000" font-family="Liberation Mono" textLength="15.5" lengthAdjust="spacingAndGlyphs">999</text><path d="M3,24 v4 M10,24 v4 M3,26 h7" stroke="#000" stroke-width="1.2"/><path d="M-1,5.5 l3,3 l-3,3z" fill="#d02020"/></g>
<g transform="translate(53,387)"><rect x="0.5" y="0.5" width="31" height="31" fill="#fbf6d2" stroke="#000" stroke-width="1.2"/><path d="M4.5,3 v6 M7.5,3 v6 M3,5 h6 M3,7.5 h6" fill="none" stroke="#000" stroke-width="1.3"/><path d="M10,4.5 h11 q3,0 3,3 v2" fill="none" stroke="#000" stroke-width="2"/><path d="M20.5,8.5 h6 l-3,3.5z" fill="#fff" stroke="#000" stroke-width="1.1"/><rect x="14.5" y="12.5" width="17" height="8" fill="#fff" stroke="#000" stroke-width="1.1"/><text x="15.3" y="19.6" font-size="8.2" font-weight="bold" fill="#000" font-family="Liberation Mono" textLength="15.5" lengthAdjust="spacingAndGlyphs">999</text><path d="M3,24 v4 M10,24 v4 M3,26 h7" stroke="#000" stroke-width="1.2"/><path d="M-1,5.5 l3,3 l-3,3z" fill="#d02020"/></g>
<rect x="31.15" y="281.15" width="11.7" height="16.7" fill="#f8f8ff" stroke="#1c1cb0" stroke-width="2.3"/><text x="37.0" y="294.0" font-size="13" text-anchor="middle" fill="#1a1a1a" stroke="#1a1a1a" stroke-width="0.25">3</text>
<rect x="30.65" y="340.15" width="10.7" height="16.7" fill="#f8f8ff" stroke="#1c1cb0" stroke-width="2.3"/><text x="36.0" y="353.0" font-size="13" text-anchor="middle" fill="#1a1a1a" stroke="#1a1a1a" stroke-width="0.25">3</text>
<rect x="35.65" y="405.15" width="10.7" height="16.7" fill="#f8f8ff" stroke="#1c1cb0" stroke-width="2.3"/><text x="41.0" y="418.0" font-size="13" text-anchor="middle" fill="#1a1a1a" stroke="#1a1a1a" stroke-width="0.25">3</text>
<g transform="translate(147,288)"><rect x="0.5" y="0.5" width="31" height="56" fill="#fbf6d2" stroke="#000" stroke-width="1.2"/><path d="M16.5,0.5 v56" stroke="#000" stroke-width="1.2"/><rect x="2.5" y="1.5" width="7" height="5" fill="#fff" stroke="#000" stroke-width="1.2"/><path d="M10,4 h4 M12,2 l2,2 l-2,2" fill="none" stroke="#000" stroke-width="1.3"/><rect x="2.5" y="9.5" width="7" height="5" fill="url(#chk)" stroke="#000" stroke-width="1.2"/><path d="M10,12 h4 M12,10 l2,2 l-2,2" fill="none" stroke="#000" stroke-width="1.3"/><rect x="2.5" y="17.5" width="7" height="5" fill="url(#chk)" stroke="#000" stroke-width="1.2"/><path d="M10,20 h4 M12,18 l2,2 l-2,2" fill="none" stroke="#000" stroke-width="1.3"/><rect x="2.5" y="25.5" width="7" height="5" fill="url(#chk)" stroke="#000" stroke-width="1.2"/><path d="M10,28 h4 M12,26 l2,2 l-2,2" fill="none" stroke="#000" stroke-width="1.3"/><rect x="2.5" y="33.5" width="7" height="5" fill="url(#chk)" stroke="#000" stroke-width="1.2"/><path d="M10,36 h4 M12,34 l2,2 l-2,2" fill="none" stroke="#000" stroke-width="1.3"/><rect x="2.5" y="41.5" width="7" height="5" fill="url(#chk)" stroke="#000" stroke-width="1.2"/><path d="M10,44 h4 M12,42 l2,2 l-2,2" fill="none" stroke="#000" stroke-width="1.3"/><rect x="2.5" y="49.5" width="7" height="5" fill="url(#chk)" stroke="#000" stroke-width="1.2"/><path d="M10,52 h4 M12,50 l2,2 l-2,2" fill="none" stroke="#000" stroke-width="1.3"/><rect x="19" y="25" width="11" height="6" fill="#222"/><text x="20" y="30.5" font-size="6" fill="#fff" font-weight="bold">ISC</text><rect x="16.5" y="0.5" width="14.5" height="56" fill="#fbf6d2" opacity="0"/></g>
<rect x="114" y="304" width="17" height="20" fill="#f6e4f6"/><rect x="115" y="305" width="15" height="18" fill="#fff" stroke="#a43aa4" stroke-width="2.1"/><rect x="114" y="305" width="4" height="18" fill="#e020e0"/>
<path d="M120.5,316.5 h2 l-1.5,4 h-1z" fill="#222"/>
<rect x="139" y="387" width="17" height="20" fill="#f6e4f6"/><rect x="140" y="388" width="15" height="18" fill="#fff" stroke="#a43aa4" stroke-width="2.1"/><rect x="139" y="388" width="4" height="18" fill="#e020e0"/><text x="143.80" y="401.5" font-size="15" fill="#111" textLength="3.80" lengthAdjust="spacingAndGlyphs" style="white-space:pre" stroke="#111" stroke-width="0.3">)</text>
<rect x="-3" y="184" width="134" height="21" fill="#f6e4f6"/><rect x="-2" y="185" width="132" height="19" fill="#fff" stroke="#a43aa4" stroke-width="2.1"/><text x="3.10" y="199.6" font-size="12.8" fill="#111" textLength="124.20" lengthAdjust="spacingAndGlyphs" style="white-space:pre" stroke="#111" stroke-width="0.3">, Feuchtigkeit) values(</text>
<rect x="308" y="315" width="142" height="20" fill="#f6e4f6"/><rect x="309" y="316" width="140" height="18" fill="#fff" stroke="#a43aa4" stroke-width="2.1"/><rect x="308" y="316" width="4" height="18" fill="#e020e0"/><text x="313.80" y="329.6" font-size="13.2" fill="#111" textLength="132.19" lengthAdjust="spacingAndGlyphs" style="white-space:pre" stroke="#111" stroke-width="0.3">austrocknungsmessung</text>
<g transform="translate(185,370)"><rect x="0.5" y="0.5" width="37" height="37" fill="#f4b8f4" stroke="#a048a0" stroke-width="1"/><rect x="3.5" y="3.5" width="31" height="31" fill="#a8a0a8" stroke="#9040a0" stroke-width="1"/><rect x="8" y="14" width="24" height="9" fill="#d8d8d8"/><path d="M3,13 l5,5 l-5,5z" fill="#fff" stroke="#000" stroke-width="1"/><text x="10" y="22" font-size="9" font-weight="bold" fill="#000">abc</text><rect x="12" y="29" width="16" height="7" fill="#f0c0f0" stroke="#c040c0" stroke-width="0.8"/><text x="13" y="35" font-size="7.5" fill="#c030c0">abc</text></g>
<g transform="translate(232,303)"><rect x="0.5" y="0.5" width="31" height="31" fill="#fff" stroke="#000" stroke-width="1.2"/><path d="M2.5,2 l10,5.5 l-10,5.5z" fill="#1f7f2a" stroke="#000" stroke-width="0.8"/><path d="M16.5,5.5 v4.5 M16.5,5.5 h2.5 M16.5,7.75 h2.2 M16.5,10 h2.5 M20.5,5.5 l3,4.5 M23.5,5.5 l-3,4.5 M25.5,5.5 v4.5 M25.5,5.5 h2.5 M25.5,7.75 h2.2 M25.5,10 h2.5" stroke="#000" stroke-width="1.1" fill="none"/><g transform="translate(3,23)" fill="none" stroke="#000" stroke-width="1.5"><path d="M0.75,0.75 h2 q2,0 2,2 v2 q0,2 -2,2 h-2z"/><path d="M6.25,0.75 h2 q1.5,0 1.5,1.5 q0,1.5 -1.5,1.5 q1.7,0 1.7,1.5 q0,1.5 -1.7,1.5 h-2z"/></g><g transform="translate(14,14)"><path d="M0.5,3.5 q0,-3 3,-3 h8 q3,0 3,3 v9 q0,2.5 -3,2.5 h-8 q-3,0 -3,-2.5z" fill="#94b88c" stroke="#000" stroke-width="1.1"/><path d="M1.5,3.5 q1,2 4,2 h4 q3,0 4,-2" fill="none" stroke="#000" stroke-width="1"/><path d="M3,2.5 h9" stroke="#e0f0d8" stroke-width="1"/><rect x="5.5" y="6.5" width="10" height="8" fill="#000"/><rect x="6.5" y="7.5" width="2.4" height="2.4" fill="#fff" stroke="#000" stroke-width="0.9"/><rect x="6.5" y="11.1" width="2.4" height="2.4" fill="#fff" stroke="#000" stroke-width="0.9"/><rect x="9.7" y="7.5" width="2.4" height="2.4" fill="#fff" stroke="#000" stroke-width="0.9"/><rect x="9.7" y="11.1" width="2.4" height="2.4" fill="#fff" stroke="#000" stroke-width="0.9"/><rect x="12.9" y="7.5" width="2.4" height="2.4" fill="#fff" stroke="#000" stroke-width="0.9"/><rect x="12.9" y="11.1" width="2.4" height="2.4" fill="#fff" stroke="#000" stroke-width="0.9"/></g></g>
<g transform="translate(473,365)"><rect x="0.5" y="0.5" width="31" height="31" fill="#fff" stroke="#000" stroke-width="1.2"/><rect x="2.5" y="2.5" width="12" height="7" fill="#fff" stroke="#602060" stroke-width="1.2"/><path d="M4,6 h9" stroke="#602060" stroke-width="1.2"/><rect x="6.5" y="4.5" width="4" height="3" fill="#fff" stroke="#602060" stroke-width="1"/><path d="M17,3 h-1.5 q-1,0 -1,1 q0,1 1,1 h0.6 q1,0 1,1 q0,1 -1,1 h-1.6 M19,2.5 v4.5 M19,2.5 h2.5 M19,4.75 h2.2 M19,7 h2.5 M23,2.5 v4.5 h3" stroke="#000" stroke-width="1" fill="none"/><path d="M12,15.5 l-4,-4 M8,11.5 h2.5 M8,11.5 v2.5 M20.5,12.5 l-4,-4 M16.5,8.5 h2.5 M16.5,8.5 v2.5" stroke="#000" stroke-width="1.1" fill="none"/><g transform="translate(3,23)" fill="none" stroke="#000" stroke-width="1.5"><path d="M0.75,0.75 h2 q2,0 2,2 v2 q0,2 -2,2 h-2z"/><path d="M6.25,0.75 h2 q1.5,0 1.5,1.5 q0,1.5 -1.5,1.5 q1.7,0 1.7,1.5 q0,1.5 -1.7,1.5 h-2z"/></g><g transform="translate(14,14.5)"><path d="M0.5,3.5 q0,-3 3,-3 h8 q3,0 3,3 v9 q0,2.5 -3,2.5 h-8 q-3,0 -3,-2.5z" fill="#94b88c" stroke="#000" stroke-width="1.1"/><path d="M1.5,3.5 q1,2 4,2 h4 q3,0 4,-2" fill="none" stroke="#000" stroke-width="1"/><path d="M3,2.5 h9" stroke="#e0f0d8" stroke-width="1"/><rect x="5.5" y="6.5" width="10" height="8" fill="#000"/><rect x="6.5" y="7.5" width="2.4" height="2.4" fill="#fff" stroke="#000" stroke-width="0.9"/><rect x="6.5" y="11.1" width="2.4" height="2.4" fill="#fff" stroke="#000" stroke-width="0.9"/><rect x="9.7" y="7.5" width="2.4" height="2.4" fill="#fff" stroke="#000" stroke-width="0.9"/><rect x="9.7" y="11.1" width="2.4" height="2.4" fill="#fff" stroke="#000" stroke-width="0.9"/><rect x="12.9" y="7.5" width="2.4" height="2.4" fill="#fff" stroke="#000" stroke-width="0.9"/><rect x="12.9" y="11.1" width="2.4" height="2.4" fill="#fff" stroke="#000" stroke-width="0.9"/></g></g>
<g transform="translate(534,396)"><rect x="0.5" y="0.5" width="31" height="33" fill="url(#nodeg)" stroke="#000" stroke-width="1.2"/><path d="M13.5,4.5 h1 v14 h-10 v-1" fill="none" stroke="#000" stroke-width="1"/><rect x="2" y="2" width="11" height="16" fill="#000"/><rect x="3" y="3" width="4" height="4" fill="#fff"/><rect x="3" y="8" width="4" height="4" fill="#fff"/><rect x="3" y="13" width="4" height="4" fill="#fff"/><rect x="8" y="3" width="4" height="4" fill="#fff"/><rect x="8" y="8" width="4" height="4" fill="#fff"/><rect x="8" y="13" width="4" height="4" fill="#fff"/><rect x="2.5" y="20.5" width="4" height="3" fill="#000"/><rect x="7.5" y="22.5" width="1" height="1" fill="#000"/><path d="M9,23.5 l2,-3.5 M10,20 h1.5 v1.5" fill="none" stroke="#000" stroke-width="1"/><rect x="2.5" y="28.5" width="4" height="3" fill="#000"/><rect x="7.5" y="30.5" width="1" height="1" fill="#000"/><path d="M9,31.5 l2,-3.5 M10,28 h1.5 v1.5" fill="none" stroke="#000" stroke-width="1"/><rect x="20.5" y="24.5" width="4" height="4" fill="#fff" stroke="#000" stroke-width="1"/></g>
<g transform="translate(532,457)"><rect x="0.5" y="0.5" width="31" height="33" fill="url(#nodeg)" stroke="#000" stroke-width="1.2"/><path d="M13.5,4.5 h1 v14 h-10 v-1" fill="none" stroke="#000" stroke-width="1"/><rect x="2" y="2" width="11" height="16" fill="#000"/><rect x="3" y="3" width="4" height="4" fill="#fff"/><rect x="3" y="8" width="4" height="4" fill="#fff"/><rect x="3" y="13" width="4" height="4" fill="#fff"/><rect x="8" y="3" width="4" height="4" fill="#fff"/><rect x="8" y="8" width="4" height="4" fill="#fff"/><rect x="8" y="13" width="4" height="4" fill="#fff"/><rect x="2.5" y="20.5" width="4" height="3" fill="#000"/><rect x="7.5" y="22.5" width="1" height="1" fill="#000"/><path d="M9,23.5 l2,-3.5 M10,20 h1.5 v1.5" fill="none" stroke="#000" stroke-width="1"/><rect x="2.5" y="28.5" width="4" height="3" fill="#000"/><rect x="7.5" y="30.5" width="1" height="1" fill="#000"/><path d="M9,31.5 l2,-3.5 M10,28 h1.5 v1.5" fill="none" stroke="#000" stroke-width="1"/><rect x="20.5" y="24.5" width="4" height="4" fill="#fff" stroke="#000" stroke-width="1"/></g>
<g transform="translate(531,516)"><rect x="0.5" y="0.5" width="31" height="34" fill="url(#nodeg)" stroke="#000" stroke-width="1.2"/><path d="M13.5,4.5 h1 v14 h-10 v-1" fill="none" stroke="#000" stroke-width="1"/><rect x="2" y="2" width="11" height="16" fill="#000"/><rect x="3" y="3" width="4" height="4" fill="#fff"/><rect x="3" y="8" width="4" height="4" fill="#fff"/><rect x="3" y="13" width="4" height="4" fill="#fff"/><rect x="8" y="3" width="4" height="4" fill="#fff"/><rect x="8" y="8" width="4" height="4" fill="#fff"/><rect x="8" y="13" width="4" height="4" fill="#fff"/><rect x="2.5" y="20.5" width="4" height="3" fill="#000"/><rect x="7.5" y="22.5" width="1" height="1" fill="#000"/><path d="M9,23.5 l2,-3.5 M10,20 h1.5 v1.5" fill="none" stroke="#000" stroke-width="1"/><rect x="2.5" y="29.5" width="4" height="3" fill="#000"/><rect x="7.5" y="31.5" width="1" height="1" fill="#000"/><path d="M9,32.5 l2,-3.5 M10,29 h1.5 v1.5" fill="none" stroke="#000" stroke-width="1"/><rect x="20.5" y="24.5" width="4" height="4" fill="#fff" stroke="#000" stroke-width="1"/></g>
<rect x="513.15" y="409.15" width="11.7" height="17.7" fill="#f8f8ff" stroke="#1c1cb0" stroke-width="2.3"/><text x="519.0" y="422.5" font-size="13" text-anchor="middle" fill="#1a1a1a" stroke="#1a1a1a" stroke-width="0.25">8</text>
<rect x="513.15" y="435.15" width="11.7" height="17.7" fill="#f8f8ff" stroke="#1c1cb0" stroke-width="2.3"/><text x="519.0" y="448.5" font-size="13" text-anchor="middle" fill="#1a1a1a" stroke="#1a1a1a" stroke-width="0.25">3</text>
<rect x="511.15" y="470.15" width="11.7" height="16.7" fill="#f8f8ff" stroke="#1c1cb0" stroke-width="2.3"/><text x="517.0" y="483.0" font-size="13" text-anchor="middle" fill="#1a1a1a" stroke="#1a1a1a" stroke-width="0.25">8</text>
<rect x="511.15" y="489.15" width="11.7" height="16.7" fill="#f8f8ff" stroke="#1c1cb0" stroke-width="2.3"/><text x="517.0" y="502.0" font-size="13" text-anchor="middle" fill="#1a1a1a" stroke="#1a1a1a" stroke-width="0.25">2</text>
<rect x="511.15" y="529.15" width="10.7" height="16.7" fill="#f8f8ff" stroke="#1c1cb0" stroke-width="2.3"/><text x="516.5" y="542.0" font-size="13" text-anchor="middle" fill="#1a1a1a" stroke="#1a1a1a" stroke-width="0.25">8</text>
<rect x="511.15" y="551.15" width="10.7" height="16.7" fill="#f8f8ff" stroke="#1c1cb0" stroke-width="2.3"/><text x="516.5" y="564.0" font-size="13" text-anchor="middle" fill="#1a1a1a" stroke="#1a1a1a" stroke-width="0.25">1</text>
<g transform="translate(606,398)"><rect x="0.5" y="0.5" width="31" height="31" fill="#fbf6d2" stroke="#000" stroke-width="1.2"/><path d="M3,3 h3 l2,3 l2,-3 h3 v3 l-2,3 l2,2 l-2,2 l2,3 v3 h-3 l-2,-3 l-2,3 h-3 v-3 l2,-3 l-2,-2 l2,-2 l-2,-3z" fill="url(#chk)" stroke="#000" stroke-width="1"/><path d="M13,11 h6" stroke="#000" stroke-width="1.3"/><path d="M18,8.5 l3,2.5 l-3,2.5z" fill="#000"/><rect x="21.5" y="3.5" width="8" height="10" fill="#fff" stroke="#000" stroke-width="1.3"/><rect x="23" y="5.5" width="5" height="2.5" fill="#000"/><rect x="26" y="9.5" width="2" height="2" fill="#000"/><g transform="translate(3,23)" fill="none" stroke="#000" stroke-width="1.5"><path d="M0.75,0.75 h2 q2,0 2,2 v2 q0,2 -2,2 h-2z"/><path d="M6.25,0.75 h2 q1.5,0 1.5,1.5 q0,1.5 -1.5,1.5 q1.7,0 1.7,1.5 q0,1.5 -1.7,1.5 h-2z"/></g><g transform="translate(14,14.5)"><path d="M0.5,3.5 q0,-3 3,-3 h8 q3,0 3,3 v9 q0,2.5 -3,2.5 h-8 q-3,0 -3,-2.5z" fill="#94b88c" stroke="#000" stroke-width="1.1"/><path d="M1.5,3.5 q1,2 4,2 h4 q3,0 4,-2" fill="none" stroke="#000" stroke-width="1"/><path d="M3,2.5 h9" stroke="#e0f0d8" stroke-width="1"/><rect x="5.5" y="6.5" width="10" height="8" fill="#000"/><rect x="6.5" y="7.5" width="2.4" height="2.4" fill="#fff" stroke="#000" stroke-width="0.9"/><rect x="6.5" y="11.1" width="2.4" height="2.4" fill="#fff" stroke="#000" stroke-width="0.9"/><rect x="9.7" y="7.5" width="2.4" height="2.4" fill="#fff" stroke="#000" stroke-width="0.9"/><rect x="9.7" y="11.1" width="2.4" height="2.4" fill="#fff" stroke="#000" stroke-width="0.9"/><rect x="12.9" y="7.5" width="2.4" height="2.4" fill="#fff" stroke="#000" stroke-width="0.9"/><rect x="12.9" y="11.1" width="2.4" height="2.4" fill="#fff" stroke="#000" stroke-width="0.9"/></g></g>
<g transform="translate(592,458)"><rect x="0.5" y="0.5" width="31" height="31" fill="#fbf6d2" stroke="#000" stroke-width="1.2"/><path d="M3,3 h3 l2,3 l2,-3 h3 v3 l-2,3 l2,2 l-2,2 l2,3 v3 h-3 l-2,-3 l-2,3 h-3 v-3 l2,-3 l-2,-2 l2,-2 l-2,-3z" fill="url(#chk)" stroke="#000" stroke-width="1"/><path d="M13,11 h6" stroke="#000" stroke-width="1.3"/><path d="M18,8.5 l3,2.5 l-3,2.5z" fill="#000"/><rect x="21.5" y="3.5" width="8" height="10" fill="#fff" stroke="#000" stroke-width="1.3"/><rect x="23" y="5.5" width="5" height="2.5" fill="#000"/><rect x="26" y="9.5" width="2" height="2" fill="#000"/><g transform="translate(3,23)" fill="none" stroke="#000" stroke-width="1.5"><path d="M0.75,0.75 h2 q2,0 2,2 v2 q0,2 -2,2 h-2z"/><path d="M6.25,0.75 h2 q1.5,0 1.5,1.5 q0,1.5 -1.5,1.5 q1.7,0 1.7,1.5 q0,1.5 -1.7,1.5 h-2z"/></g><g transform="translate(14,14.5)"><path d="M0.5,3.5 q0,-3 3,-3 h8 q3,0 3,3 v9 q0,2.5 -3,2.5 h-8 q-3,0 -3,-2.5z" fill="#94b88c" stroke="#000" stroke-width="1.1"/><path d="M1.5,3.5 q1,2 4,2 h4 q3,0 4,-2" fill="none" stroke="#000" stroke-width="1"/><path d="M3,2.5 h9" stroke="#e0f0d8" stroke-width="1"/><rect x="5.5" y="6.5" width="10" height="8" fill="#000"/><rect x="6.5" y="7.5" width="2.4" height="2.4" fill="#fff" stroke="#000" stroke-width="0.9"/><rect x="6.5" y="11.1" width="2.4" height="2.4" fill="#fff" stroke="#000" stroke-width="0.9"/><rect x="9.7" y="7.5" width="2.4" height="2.4" fill="#fff" stroke="#000" stroke-width="0.9"/><rect x="9.7" y="11.1" width="2.4" height="2.4" fill="#fff" stroke="#000" stroke-width="0.9"/><rect x="12.9" y="7.5" width="2.4" height="2.4" fill="#fff" stroke="#000" stroke-width="0.9"/><rect x="12.9" y="11.1" width="2.4" height="2.4" fill="#fff" stroke="#000" stroke-width="0.9"/></g></g>
<g transform="translate(590,519)"><rect x="0.5" y="0.5" width="31" height="31" fill="#fbf6d2" stroke="#000" stroke-width="1.2"/><path d="M3,3 h3 l2,3 l2,-3 h3 v3 l-2,3 l2,2 l-2,2 l2,3 v3 h-3 l-2,-3 l-2,3 h-3 v-3 l2,-3 l-2,-2 l2,-2 l-2,-3z" fill="url(#chk)" stroke="#000" stroke-width="1"/><path d="M13,11 h6" stroke="#000" stroke-width="1.3"/><path d="M18,8.5 l3,2.5 l-3,2.5z" fill="#000"/><rect x="21.5" y="3.5" width="8" height="10" fill="#fff" stroke="#000" stroke-width="1.3"/><rect x="23" y="5.5" width="5" height="2.5" fill="#000"/><rect x="26" y="9.5" width="2" height="2" fill="#000"/><g transform="translate(3,23)" fill="none" stroke="#000" stroke-width="1.5"><path d="M0.75,0.75 h2 q2,0 2,2 v2 q0,2 -2,2 h-2z"/><path d="M6.25,0.75 h2 q1.5,0 1.5,1.5 q0,1.5 -1.5,1.5 q1.7,0 1.7,1.5 q0,1.5 -1.7,1.5 h-2z"/></g><g transform="translate(14,14.5)"><path d="M0.5,3.5 q0,-3 3,-3 h8 q3,0 3,3 v9 q0,2.5 -3,2.5 h-8 q-3,0 -3,-2.5z" fill="#94b88c" stroke="#000" stroke-width="1.1"/><path d="M1.5,3.5 q1,2 4,2 h4 q3,0 4,-2" fill="none" stroke="#000" stroke-width="1"/><path d="M3,2.5 h9" stroke="#e0f0d8" stroke-width="1"/><rect x="5.5" y="6.5" width="10" height="8" fill="#000"/><rect x="6.5" y="7.5" width="2.4" height="2.4" fill="#fff" stroke="#000" stroke-width="0.9"/><rect x="6.5" y="11.1" width="2.4" height="2.4" fill="#fff" stroke="#000" stroke-width="0.9"/><rect x="9.7" y="7.5" width="2.4" height="2.4" fill="#fff" stroke="#000" stroke-width="0.9"/><rect x="9.7" y="11.1" width="2.4" height="2.4" fill="#fff" stroke="#000" stroke-width="0.9"/><rect x="12.9" y="7.5" width="2.4" height="2.4" fill="#fff" stroke="#000" stroke-width="0.9"/><rect x="12.9" y="11.1" width="2.4" height="2.4" fill="#fff" stroke="#000" stroke-width="0.9"/></g></g>
<rect x="613" y="357" width="16" height="13" fill="#fbf6d2" stroke="#d03cd0" stroke-width="2.2"/><text x="615.5" y="364.5" font-size="8" font-weight="bold" fill="#8a208a" textLength="11" lengthAdjust="spacingAndGlyphs">"" ""</text>
<rect x="598" y="434" width="16" height="13" fill="#fbf6d2" stroke="#d03cd0" stroke-width="2.2"/><text x="600.5" y="441.5" font-size="8" font-weight="bold" fill="#8a208a" textLength="11" lengthAdjust="spacingAndGlyphs">"" ""</text>
<rect x="599" y="493" width="16" height="13" fill="#fbf6d2" stroke="#d03cd0" stroke-width="2.2"/><text x="601.5" y="500.5" font-size="8" font-weight="bold" fill="#8a208a" textLength="11" lengthAdjust="spacingAndGlyphs">"" ""</text>
<g transform="translate(702,384)"><rect x="0.5" y="0.5" width="37" height="37" fill="#f4b8f4" stroke="#a048a0" stroke-width="1"/><rect x="3.5" y="3.5" width="31" height="31" fill="#a8a0a8" stroke="#9040a0" stroke-width="1"/><rect x="8" y="14" width="24" height="9" fill="#d8d8d8"/><path d="M3,13 l5,5 l-5,5z" fill="#fff" stroke="#000" stroke-width="1"/><text x="10" y="22" font-size="9" font-weight="bold" fill="#000">abc</text><rect x="12" y="29" width="16" height="7" fill="#f0c0f0" stroke="#c040c0" stroke-width="0.8"/><text x="13" y="35" font-size="7.5" fill="#c030c0">abc</text></g>
<g transform="translate(698,449)"><rect x="0.5" y="0.5" width="37" height="36" fill="#f4b8f4" stroke="#a048a0" stroke-width="1"/><rect x="3.5" y="3.5" width="31" height="30" fill="#a8a0a8" stroke="#9040a0" stroke-width="1"/><rect x="8" y="14" width="24" height="9" fill="#d8d8d8"/><path d="M3,13 l5,5 l-5,5z" fill="#fff" stroke="#000" stroke-width="1"/><text x="10" y="22" font-size="9" font-weight="bold" fill="#000">abc</text><rect x="12" y="28" width="16" height="7" fill="#f0c0f0" stroke="#c040c0" stroke-width="0.8"/><text x="13" y="34" font-size="7.5" fill="#c030c0">abc</text></g>
<g transform="translate(698,509)"><rect x="0.5" y="0.5" width="37" height="36" fill="#f4b8f4" stroke="#a048a0" stroke-width="1"/><rect x="3.5" y="3.5" width="31" height="30" fill="#a8a0a8" stroke="#9040a0" stroke-width="1"/><rect x="8" y="14" width="24" height="9" fill="#d8d8d8"/><path d="M3,13 l5,5 l-5,5z" fill="#fff" stroke="#000" stroke-width="1"/><text x="10" y="22" font-size="9" font-weight="bold" fill="#000">abc</text><rect x="12" y="28" width="16" height="7" fill="#f0c0f0" stroke="#c040c0" stroke-width="0.8"/><text x="13" y="34" font-size="7.5" fill="#c030c0">abc</text></g>
<text x="186.00" y="365" font-size="13" fill="#222" textLength="111.00" lengthAdjust="spacingAndGlyphs" style="white-space:pre" >concatenated string</text>
<text x="704.00" y="379.3" font-size="12.3" fill="#222" textLength="23.39" lengthAdjust="spacingAndGlyphs" style="white-space:pre" >data</text>
<text x="699.60" y="444.3" font-size="12.3" fill="#222" textLength="35.20" lengthAdjust="spacingAndGlyphs" style="white-space:pre" >data 2</text>
<text x="699.60" y="503.3" font-size="12.3" fill="#222" textLength="35.20" lengthAdjust="spacingAndGlyphs" style="white-space:pre" >data 3</text>
<text x="214.54" y="675.6" font-size="15" font-weight="bold" fill="#111" textLength="140.16" lengthAdjust="spacingAndGlyphs" style="white-space:pre" >werte werden aus der</text>
<text x="214.50" y="693.4" font-size="15" font-weight="bold" fill="#111" textLength="113.21" lengthAdjust="spacingAndGlyphs" style="white-space:pre" >datenbank geholt</text>
<text x="406.40" y="675" font-size="15" font-weight="bold" fill="#111" textLength="273.40" lengthAdjust="spacingAndGlyphs" style="white-space:pre" >hier wird die reihe sowie die spalte der zu</text>
<text x="406.40" y="692.5" font-size="15" font-weight="bold" fill="#111" textLength="211.89" lengthAdjust="spacingAndGlyphs" style="white-space:pre" >empfangenden werte eingegeben</text>
</g></svg>
<div id="vs" class="a"></div>
<div id="hs" class="a"></div>
<div id="corner" class="a"></div>
<div class="a sbtn" style="left:1005px;top:79px;width:16px;height:17px"><svg width="16" height="17"><path d="M4,10 l4,-4 l4,4" fill="none" stroke="#4d6185" stroke-width="2"/></svg></div>
<div class="a sthumb" style="left:1005px;top:178px;width:16px;height:448px"></div>
<div class="a" style="left:1009px;top:397px;width:6px;height:8px;background:repeating-linear-gradient(#eef2fc 0 1px,#aab8d8 1px 2px)"></div>
<div class="a sbtn" style="left:1005px;top:702px;width:16px;height:16px"><svg width="16" height="16"><path d="M4,6 l4,4 l4,-4" fill="none" stroke="#4d6185" stroke-width="2"/></svg></div>
<div class="a sbtn" style="left:3px;top:719px;width:17px;height:16px"><svg width="17" height="16"><path d="M10,4 l-4,4 l4,4" fill="none" stroke="#4d6185" stroke-width="2"/></svg></div>
<div class="a sthumb" style="left:399px;top:718px;width:394px;height:17px;background:linear-gradient(#c8d8fe,#bccefc 50%,#b4c6fa)"></div>
<div class="a" style="left:592px;top:723px;width:8px;height:6px;background:repeating-linear-gradient(90deg,#eef2fc 0 1px,#aab8d8 1px 2px)"></div>
<div class="a sbtn" style="left:986px;top:719px;width:17px;height:15px"><svg width="17" height="15"><path d="M7,4 l4,4 l-4,4" fill="none" stroke="#4d6185" stroke-width="2"/></svg></div>
<div class="a" style="left:711px;top:656.5px;width:313px;height:47px;background:#fff"></div><svg class="a" style="left:0;top:0" width="1024" height="768"><text x="711.90" y="671.6" font-size="15" font-weight="bold" fill="#111" textLength="304.49" lengthAdjust="spacingAndGlyphs" style="white-space:pre" >um die daten in labview verwenden zu  können</text><text x="710.90" y="689.2" font-size="15" font-weight="bold" fill="#111" textLength="304.99" lengthAdjust="spacingAndGlyphs" style="white-space:pre" >verwenden ich variant data to variant-baustein</text></svg>
<div id="task" class="a"></div>
<div class="a" style="left:0;top:738px;width:106px;height:30px;border-radius:0 10px 10px 0;background:linear-gradient(#3c9a3c 0%,#5ec05a 12%,#3aa03a 40%,#2e8e2e 80%,#286c28 100%)"></div>
<div class="a" style="left:11px;top:744px;width:18px;height:17px"><svg width="18" height="17"><path d="M1,3 q4,-2 7,0 v6 q-3,-2 -7,0z" fill="#f05020"/><path d="M10,1 q4,-2 7,0 v6 q-3,-2 -7,0z" fill="#40b040"/><path d="M1,10 q4,-2 7,0 v6 q-3,-2 -7,0z" fill="#3070e0"/><path d="M10,8 q4,-2 7,0 v6 q-3,-2 -7,0z" fill="#f0c020"/></svg></div>
<svg class="a" style="left:0;top:0" width="1024" height="768"><text x="36.20" y="762.7" font-size="22.7" font-weight="bold" font-style="italic" fill="#1a4a1a" textLength="46.10" lengthAdjust="spacingAndGlyphs" style="white-space:pre" opacity="0.6" transform="translate(1,1)">Start</text><text x="35.20" y="762.7" font-size="22.7" font-weight="bold" font-style="italic" fill="#fff" textLength="46.10" lengthAdjust="spacingAndGlyphs" style="white-space:pre" >Start</text></svg>
<div class="a" style="left:119px;top:745px;width:14px;height:15px;border-radius:3px;background:#e8f4fc;border:1.5px solid #80c0f0"><svg class="a" style="left:0;top:0" width="12" height="12"><path d="M3,9 l6,-6 M3,9 l1,-3 l2,2z" stroke="#223" stroke-width="1.4" fill="#223"/></svg></div>
<div class="a" style="left:139px;top:744px;width:18px;height:17px"><svg width="18" height="17"><ellipse cx="9" cy="9" rx="6" ry="6" fill="none" stroke="#60b0f0" stroke-width="3"/><path d="M4,9 h10" stroke="#60b0f0" stroke-width="2"/><path d="M1,12 q8,-12 16,-9" fill="none" stroke="#e0f0ff" stroke-width="1.4"/></svg></div>
<div class="a" style="left:164px;top:745px;width:15px;height:15px;border-radius:50%;background:conic-gradient(#f0a020,#f04040,#40a040,#f0f040,#f0a020);border:1px solid #806020"><svg width="13" height="13" style="position:absolute"><path d="M5,3 l5,3.5 l-5,3.5z" fill="#000"/></svg></div>
<div class="a" style="left:191px;top:742px;width:158px;height:23px;border-radius:3px;background:linear-gradient(#5a9af8,#3c80f0 30%,#3a7ae8 80%,#2e64d0);border:1px solid #2a5ac8"></div>
<div class="a" style="left:200px;top:746px;width:16px;height:14px"><svg width="16" height="14"><path d="M1,3 h5 l2,2 h7 v8 h-14z" fill="#f0d070" stroke="#a08030" stroke-width="1"/></svg></div>
<svg class="a" style="left:0;top:0" width="1024" height="768"><text x="220.50" y="758" font-size="13.6" fill="#fff" textLength="111.70" lengthAdjust="spacingAndGlyphs" style="white-space:pre" >CHOCO_CHANEL_...</text></svg>
<div class="a" style="left:351px;top:742px;width:158px;height:23px;border-radius:3px;background:linear-gradient(#1a48b0,#1e52c0 20%,#1e55c2 80%,#2a60d0);border:1px solid #10348a"></div>
<div class="a" style="left:364px;top:746px;width:12px;height:13px;background:#222;border:1px dotted #d0c860"><svg width="10" height="11" style="position:absolute"><path d="M2,1 l7,4.5 l-7,4.5z" fill="#e8e040"/></svg></div>
<svg class="a" style="left:0;top:0" width="1024" height="768"><text x="382.00" y="759" font-size="13.5" font-weight="bold" fill="#f4c088" textLength="6.30" lengthAdjust="spacingAndGlyphs" style="white-space:pre" >4</text><text x="393.40" y="759" font-size="13.5" fill="#fff" textLength="87.86" lengthAdjust="spacingAndGlyphs" style="white-space:pre" >LabVIEW 9.0 ...</text></svg>
<div class="a" style="left:498px;top:752px;width:0;height:0;border-left:4px solid transparent;border-right:4px solid transparent;border-top:5px solid #fff"></div>
<div class="a" style="left:889px;top:738px;width:135px;height:30px;background:linear-gradient(#1a8ee8 0%,#14a0f4 10%,#0f8ef0 50%,#0e7ad8 100%);border-left:1px solid #0a5ab8"></div>
<svg class="a" style="left:0;top:0" width="1024" height="768"><text x="862.50" y="757.9" font-size="13" fill="#fff" textLength="12.50" lengthAdjust="spacingAndGlyphs" style="white-space:pre" >DE</text><text x="977.50" y="757.9" font-size="13" fill="#fff" textLength="32.31" lengthAdjust="spacingAndGlyphs" style="white-space:pre" >21:58</text></svg>
<div class="a" style="left:880px;top:744px;width:17px;height:17px;border-radius:50%;background:radial-gradient(circle at 40% 35%,#a8d0ff,#3a80e0 70%);border:1px solid #d8e8ff"><svg width="15" height="15" style="position:absolute"><path d="M9,3 l-4,4.5 l4,4.5" fill="none" stroke="#fff" stroke-width="2.2"/></svg></div>
<div class="a" style="left:901px;top:745px;width:15px;height:15px;border-radius:50%;background:#f0c020;border:2px dotted #c08010"></div>
<div class="a" style="left:918px;top:744px;width:18px;height:17px"><svg width="18" height="17"><rect x="2" y="3" width="9" height="9" fill="#304080"/><rect x="6" y="1" width="9" height="8" fill="#6040a0"/><path d="M7,8 l8,8 M15,8 l-8,8" stroke="#e02020" stroke-width="2.5"/></svg></div>
<div class="a" style="left:938px;top:744px;width:10px;height:17px;background:#10e010;border:1.5px solid #104010"></div>
<div class="a" style="left:954px;top:745px;width:16px;height:12px;background:#909090;border:1.5px solid #404040"></div>
<div class="a" style="left:955px;top:758px;width:5px;height:3px;background:#505050"></div><div class="a" style="left:963px;top:758px;width:5px;height:3px;background:#30c030"></div>
<div class="a" style="left:844px;top:12px;width:83px;height:152px;background:#7c8fd8;border-radius:4px 4px 0 0"></div>
<div class="a" style="left:846px;top:14px;width:79px;height:21px;background:linear-gradient(#a4b8f0,#98aeea 50%,#8aa0e2);border-radius:3px 3px 0 0"></div>
<svg class="a" style="left:0;top:0" width="1024" height="168"><text x="848.40" y="30" font-size="13.4" font-weight="bold" fill="#dce4f8" textLength="35.60" lengthAdjust="spacingAndGlyphs" style="white-space:pre" >Tools</text></svg>
<div class="a" style="left:876px;top:17px;width:15px;height:15px;border:1px solid #fff;border-radius:3px;background:#20c040"><svg width="13" height="13" style="position:absolute"><path d="M3,9 h7 M5,8 l4,-4" stroke="#f0fff0" stroke-width="1"/></svg></div>
<div class="a" style="left:907px;top:17px;width:15px;height:15px;border:1px solid #e0d8f0;border-radius:3px;background:#b07ab8"><svg width="13" height="13" style="position:absolute"><path d="M3.5,3.5 l6,6 M9.5,3.5 l-6,6" stroke="#fff" stroke-width="2"/></svg></div>
<div class="a" style="left:847px;top:35px;width:77px;height:126px;background:#ece9d8"></div>
<div class="a" style="left:848px;top:36px;width:70px;height:124px;background:#222"></div>
<div class="a" style="left:849px;top:37px;width:68px;height:21px;background:#f0eee4;border-top:1px solid #fff;border-left:1px solid #fff;border-right:1px solid #808080;border-bottom:1px solid #808080"><svg width="68" height="21" style="position:absolute;left:-1px;top:-1px"><defs><linearGradient id="led" x1="0" x2="1"><stop offset="0" stop-color="#0c3a0c"/><stop offset="0.3" stop-color="#4a8a40"/><stop offset="0.6" stop-color="#1a501a"/><stop offset="1" stop-color="#0a300a"/></linearGradient></defs><path d="M22.5,5.5 l-14,11" stroke="#707070" stroke-width="2.6"/><path d="M20,3.5 q1,-2 3,-1.5 l-1.5,2 l1.5,1.5 l2,-1.5 q0.5,2.5 -2.5,3.5" fill="#707070" stroke="#505050" stroke-width="1"/><path d="M10.5,18.5 q-1,2 -3,1.5 l1.5,-2 l-1.5,-1.5 l-2,1.5 q-0.5,-2.5 2.5,-3.5" fill="#707070" stroke="#505050" stroke-width="1"/><path d="M8,4 l8,7" stroke="#555" stroke-width="1.6"/><path d="M16.5,11.5 l6,6" stroke="#000" stroke-width="3.6"/><path d="M16.5,11.5 l6,6" stroke="#f08a20" stroke-width="2"/><rect x="33" y="3" width="29" height="12" fill="#a8a8a0" stroke="#d8d8d0" stroke-width="1"/><rect x="35.5" y="5" width="24" height="8" fill="url(#led)"/></svg></div>
<div class="a" style="left:849px;top:59px;width:22px;height:21px;background:#f0eee4;border-top:1px solid #fff;border-left:1px solid #fff;border-right:1px solid #808080;border-bottom:1px solid #808080"><svg width="22" height="21" style="position:absolute;left:-1px;top:-1px"><path d="M8,19 l-4,-6 q0,-2 2,-1 l3,3 v-9 q1,-2 2,0 v6 q1,-2 2,0 q1,-2 2,0 q1,-2 2,0 v5 l-2,4z" fill="#f4c8a0" stroke="#000" stroke-width="1"/></svg></div>
<div class="a" style="left:872px;top:59px;width:22px;height:21px;background:#f0eee4;border-top:1px solid #fff;border-left:1px solid #fff;border-right:1px solid #808080;border-bottom:1px solid #808080"><svg width="22" height="21" style="position:absolute;left:-1px;top:-1px"><path d="M8,4 v12 l3,-3 l2,4 l1,-1 l-2,-4 h4z" fill="#fff" stroke="#000" stroke-width="1"/></svg></div>
<div class="a" style="left:895px;top:59px;width:22px;height:21px;background:#f0eee4;border-top:1px solid #fff;border-left:1px solid #fff;border-right:1px solid #808080;border-bottom:1px solid #808080"><svg width="22" height="21" style="position:absolute;left:-1px;top:-1px"><text x="3" y="18" font-family="Liberation Serif" font-size="18" fill="#000">A</text><path d="M16,3 v15 M14,3h4M14,18h4" stroke="#000" stroke-width="0.8" stroke-dasharray="1,1"/></svg></div>
<div class="a" style="left:849px;top:81px;width:22px;height:21px;background:#888888;border-top:1px solid #fff;border-left:1px solid #fff;border-right:1px solid #808080;border-bottom:1px solid #808080"><svg width="22" height="21" style="position:absolute;left:-1px;top:-1px"><path d="M5,14 l9,-9 l4,4 l-9,9z" fill="#333"/><path d="M5,6 l4,-2 M14,18 l4,-2" stroke="#000" stroke-width="1.5"/><path d="M7,12l7,-7M9,14l7,-7M11,16l5,-5" stroke="#906050" stroke-width="0.6"/></svg></div>
<div class="a" style="left:872px;top:81px;width:22px;height:21px;background:#f0eee4;border-top:1px solid #fff;border-left:1px solid #fff;border-right:1px solid #808080;border-bottom:1px solid #808080"><svg width="22" height="21" style="position:absolute;left:-1px;top:-1px"><path d="M4,3 v8 l2,-2 l2,3 l1,-1 l-2,-3 h3z" fill="#000"/><rect x="9" y="10" width="10" height="9" fill="#fff" stroke="#000"/><path d="M9,13h10M9,16h10" stroke="#000"/></svg></div>
<div class="a" style="left:895px;top:81px;width:22px;height:21px;background:#f0eee4;border-top:1px solid #fff;border-left:1px solid #fff;border-right:1px solid #808080;border-bottom:1px solid #808080"><svg width="22" height="21" style="position:absolute;left:-1px;top:-1px"><path d="M6,19 l-3,-7 q0,-2 2,-1 l1,2 v-8 q1,-2 2,0 v-1 q1,-2 2,0 q1,-2 2,0 v1 q1,-2 2,0 v8 l-2,6z" fill="#f4c8a0" stroke="#000" stroke-width="1"/></svg></div>
<div class="a" style="left:849px;top:103px;width:22px;height:21px;background:#f0eee4;border-top:1px solid #fff;border-left:1px solid #fff;border-right:1px solid #808080;border-bottom:1px solid #808080"><svg width="22" height="21" style="position:absolute;left:-1px;top:-1px"><path d="M8,3.5 h6.5 l4.5,4.5 v6.5 l-4.5,4.5 h-6.5 l-4.5,-4.5 v-6.5z" fill="#fff" stroke="#000" stroke-width="1"/><path d="M8.7,5.2 h5 l3.6,3.6 v5 l-3.6,3.6 h-5 l-3.6,-3.6 v-5z" fill="#e81010"/><path d="M3,3 l2.5,2.5 M3,3 h2 M3,3 v2" stroke="#000" stroke-width="1"/></svg></div>
<div class="a" style="left:872px;top:103px;width:22px;height:21px;background:#f0eee4;border-top:1px solid #fff;border-left:1px solid #fff;border-right:1px solid #808080;border-bottom:1px solid #808080"><svg width="22" height="21" style="position:absolute;left:-1px;top:-1px"><circle cx="12" cy="11" r="5" fill="#f8e040" stroke="#000"/><text x="9.5" y="14.5" font-size="8" font-weight="bold" fill="#000">P</text><path d="M2,11h5M17,11h4M4,9l-2,2l2,2" fill="none" stroke="#000"/></svg></div>
<div class="a" style="left:895px;top:103px;width:22px;height:21px;background:#f0eee4;border-top:1px solid #fff;border-left:1px solid #fff;border-right:1px solid #808080;border-bottom:1px solid #808080"><svg width="22" height="21" style="position:absolute;left:-1px;top:-1px"><path d="M4,19 l10,-10" stroke="#000" stroke-width="2.5"/><path d="M5,18 l9,-9" stroke="#a8d8f8" stroke-width="1"/><path d="M13,5 l4,-3 l3,3 l-3,4z" fill="#d02020" stroke="#000" stroke-width="0.8"/></svg></div>
<div class="a" style="left:849px;top:125px;width:68px;height:35px;background:#f0eee4;border-top:1px solid #fff;border-left:1px solid #fff;border-right:1px solid #808080;border-bottom:1px solid #808080"><svg width="68" height="35" style="position:absolute;left:-1px;top:-1px"><rect x="7" y="6" width="19.5" height="17.5" fill="#000"/><rect x="4.5" y="3.5" width="19" height="17" fill="#a8a8a8" stroke="#000" stroke-width="1.2"/><rect x="18" y="17.5" width="19.5" height="17" fill="#000"/><rect x="15.5" y="15" width="19" height="17" fill="#a8a8a8" stroke="#000" stroke-width="1.2"/><path d="M63.5,8 l-13,12" stroke="#8a7060" stroke-width="3"/><path d="M63.5,8 l-13,12" stroke="#c8b0a0" stroke-width="1"/><path d="M51.5,19 l-6,7 l-3,1 l1,-3 l6,-7z" fill="#000"/><path d="M44.5,24 l-2,3 l3,-1z" fill="#f8f070"/></svg></div>
</body></html>
